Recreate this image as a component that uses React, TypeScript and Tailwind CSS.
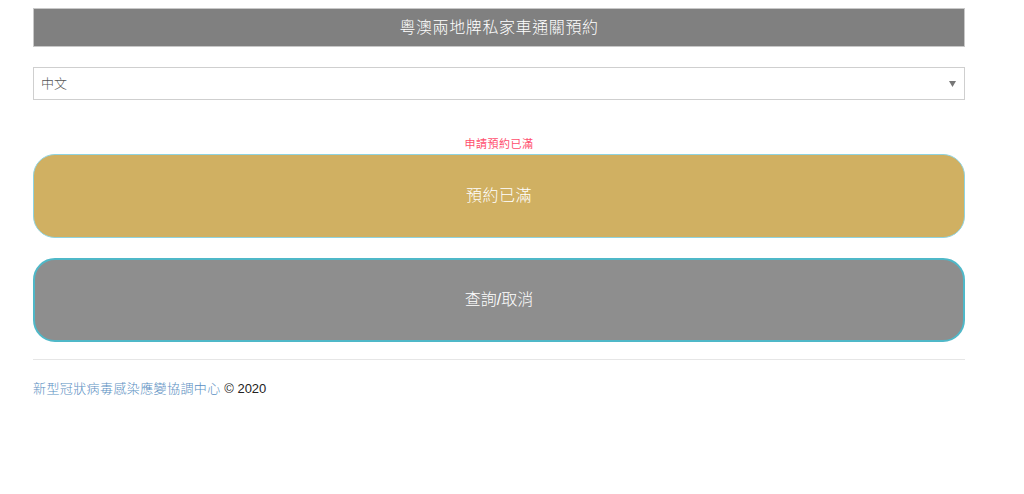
import React from "react";

export default function App() {
  const font = { fontFamily: '"Liberation Sans", "Noto Sans CJK TC", sans-serif' };
  return (
    <div className="min-h-[494px] bg-white" style={font}>
      <div className="ml-[33px] w-[932px] pt-2">
        <div className="h-[39px] bg-[#808080] border border-[#c8c8c8] flex items-center justify-center text-white text-[16px] tracking-[0.6px] font-light">
          粵澳兩地牌私家車通關預約
        </div>
        <div className="mt-[20px] h-[33px] border border-[#cfcfcf] flex items-center justify-between pl-[7px] pr-[8px] text-[13px] text-[#555] font-light">
          <span>中文</span>
          <svg width="7" height="6" viewBox="0 0 7 6"><path d="M0 0h7L3.5 6z" fill="#777" /></svg>
        </div>
        <div className="mt-[37px] text-center text-[11px] text-[#ff4d6d] leading-[14px] tracking-[0.5px]">申請預約已滿</div>
        <div className="mt-[3px] h-[84px] rounded-[22px] bg-[#d0b062] border border-[#8fd3e0] flex items-center justify-center text-white text-[16px] tracking-[0.5px] font-light">
          預約已滿
        </div>
        <div className="mt-[20px] h-[84px] rounded-[22px] bg-[#8e8e8e] border-2 border-[#4fb8c8] flex items-center justify-center text-white text-[16px] font-light">
          查詢/取消
        </div>
        <div className="mt-[17px] border-t border-[#e6e6e6]" />
        <div className="mt-[19px] text-[13px]">
          <span className="text-[#5b8fc2] tracking-[0.4px] font-light">新型冠狀病毒感染應變協調中心</span>
          <span className="text-[#222]"> © 2020</span>
        </div>
      </div>
    </div>
  );
}
